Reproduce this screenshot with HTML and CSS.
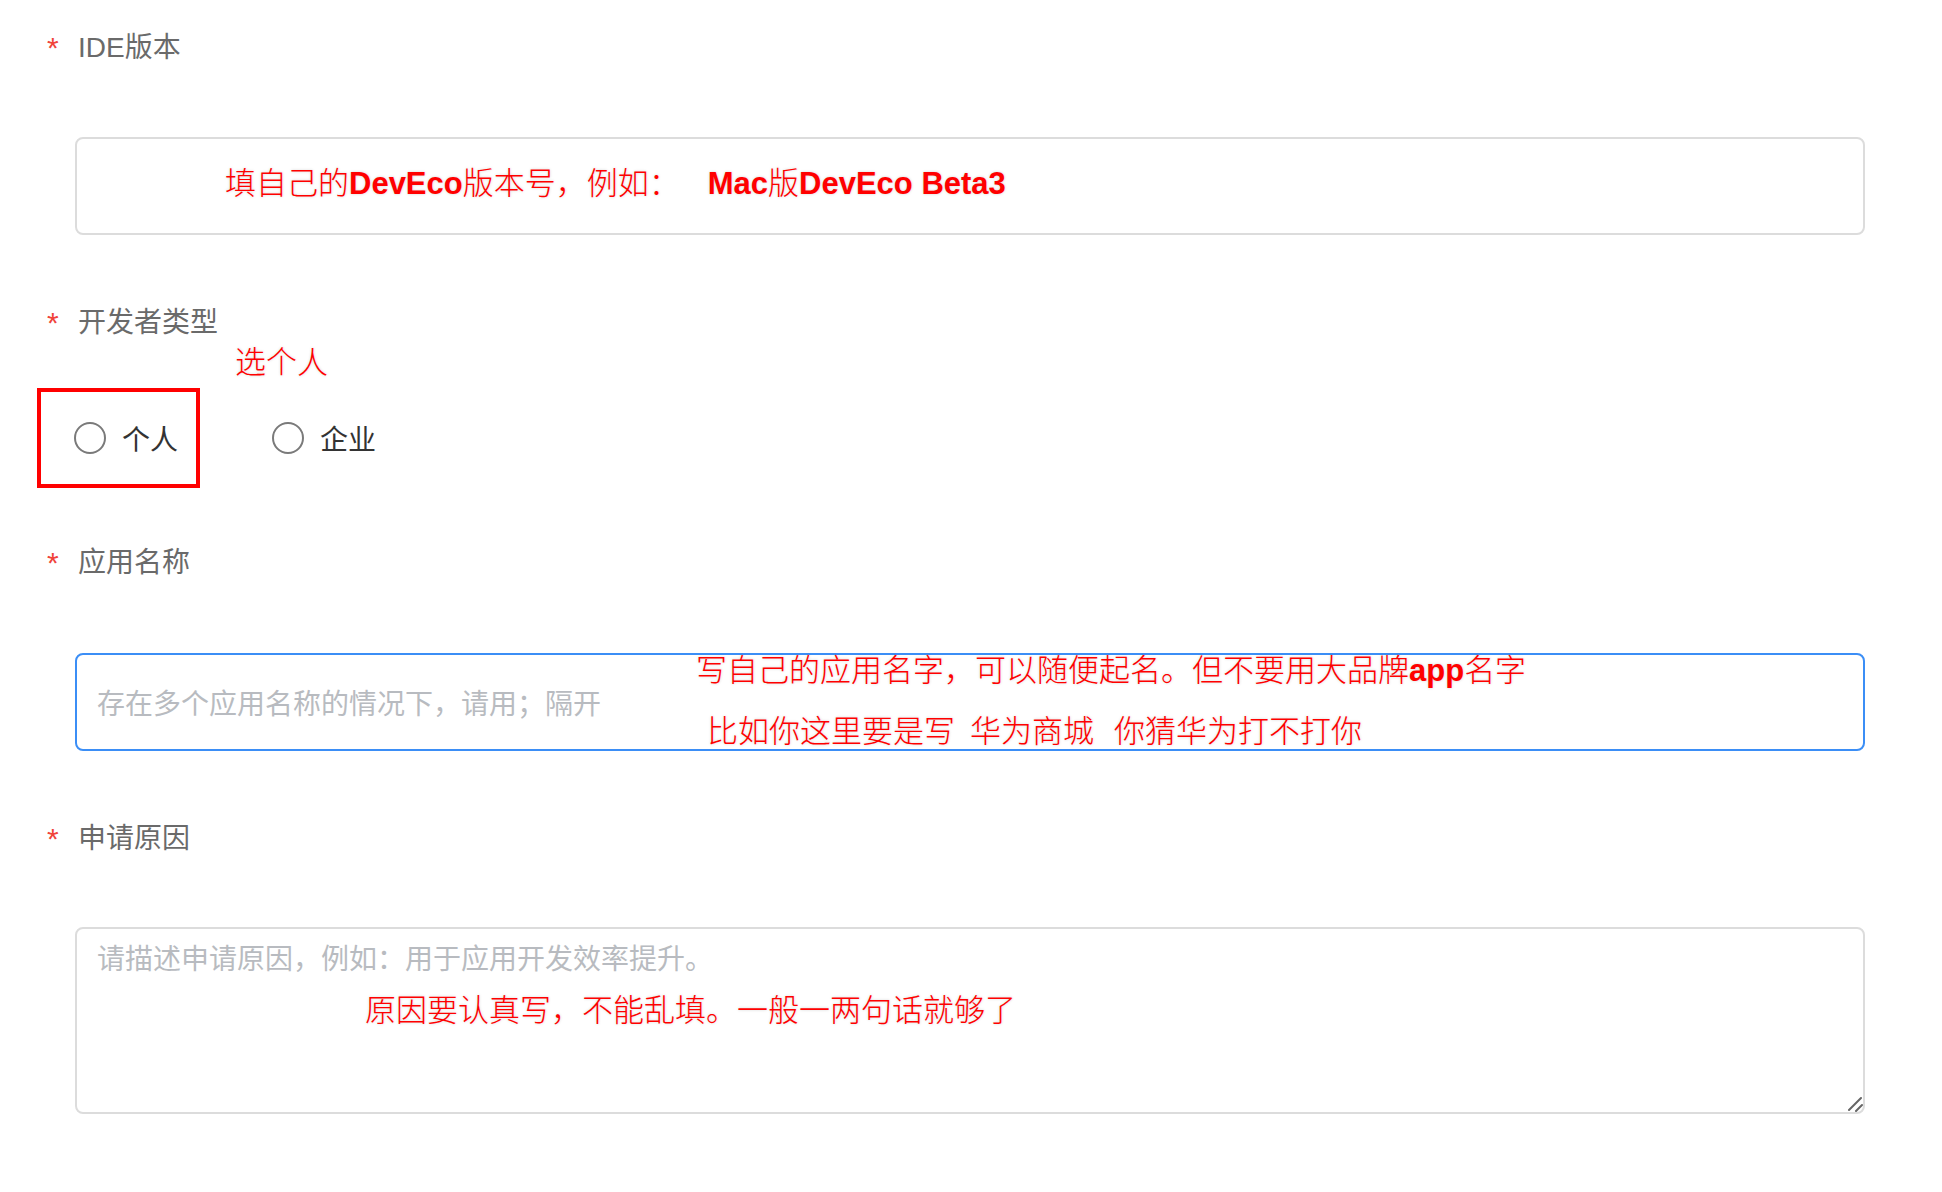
FILE: index.html
```html
<!DOCTYPE html>
<html lang="zh-CN">
<head>
<meta charset="utf-8">
<title>申请表单</title>
<link rel="stylesheet" href="styles.css">
</head>
<body>
<form class="form">
  <div class="item">
    <div class="item-label"><span class="req">*</span><span class="label-text">IDE版本</span></div>
    <div class="field field-first">
      <input class="input" type="text">
      <div class="note note-ide">填自己的<b>DevEco</b>版本号，例如：<span class="spacer spacer-ide"></span><b>Mac</b>版<b>DevEco Beta3</b></div>
    </div>
  </div>

  <div class="item item-gap">
    <div class="item-label"><span class="req">*</span><span class="label-text">开发者类型</span></div>
    <div class="note-flow">选个人</div>
    <div class="radio-row">
      <label class="radio"><input type="radio" name="devtype"><span class="radio-text">个人</span></label>
      <label class="radio"><input type="radio" name="devtype"><span class="radio-text">企业</span></label>
      <div class="highlight"></div>
    </div>
  </div>

  <div class="item item-gap-small">
    <div class="item-label"><span class="req">*</span><span class="label-text">应用名称</span></div>
    <div class="field field-app">
      <input class="input input-focus" type="text" placeholder="存在多个应用名称的情况下，请用；隔开">
      <div class="note note-app1">写自己的应用名字，可以随便起名。但不要用大品牌<b>app</b>名字</div>
      <div class="note note-app2">比如你这里要是写<span class="spacer spacer-a"></span>华为商城<span class="spacer spacer-b"></span>你猜华为打不打你</div>
    </div>
  </div>

  <div class="item item-gap">
    <div class="item-label"><span class="req">*</span><span class="label-text">申请原因</span></div>
    <div class="field field-reason">
      <textarea class="textarea" placeholder="请描述申请原因，例如：用于应用开发效率提升。"></textarea>
      <svg class="resizer" width="16" height="16" viewBox="0 0 16 16" aria-hidden="true">
        <path d="M2 14 L14 2 M9 15 L15 9" stroke="#666666" stroke-width="2" stroke-linecap="round" fill="none"/>
      </svg>
      <div class="note note-reason">原因要认真写，不能乱填。一般一两句话就够了</div>
    </div>
  </div>
</form>
</body>
</html>
```
FILE: styles.css
```css
* {
  box-sizing: border-box;
}

html, body {
  margin: 0;
  background: #ffffff;
}

body {
  font-family: "Liberation Sans", "Noto Sans CJK SC", sans-serif;
  width: 1942px;
  height: 1192px;
  overflow: hidden;
}

.form {
  padding-top: 28px;
}

.item-label {
  display: flex;
  align-items: center;
  height: 40px;
  line-height: 40px;
  font-size: 28px;
  color: #6a6a6a;
}

.req {
  width: 31px;
  margin-left: 47px;
  font-family: "Liberation Sans", sans-serif;
  font-size: 30px;
  line-height: 40px;
  color: #f0433a;
}

.label-text {
  font-family: "Liberation Sans", "Noto Sans CJK SC", sans-serif;
}

.item-gap {
  margin-top: 68px;
}

.item-gap-small {
  margin-top: 55px;
}

.field {
  position: relative;
  margin-left: 75px;
  width: 1790px;
}

.field-first {
  margin-top: 69px;
}

.field-app {
  margin-top: 70px;
}

.field-reason {
  margin-top: 68px;
}

.input {
  display: block;
  width: 100%;
  height: 98px;
  margin: 0;
  padding: 0 20px;
  border: 2px solid #dcdcdc;
  border-radius: 8px;
  outline: none;
  background: #ffffff;
  font-family: "Noto Sans CJK SC", sans-serif;
  font-size: 28px;
  color: #333333;
}

.input-focus {
  border-color: #3b8ef6;
}

.input::placeholder,
.textarea::placeholder {
  color: #b8bbc0;
  opacity: 1;
}

.textarea {
  display: block;
  width: 100%;
  height: 187px;
  margin: 0;
  padding: 8px 20px;
  border: 2px solid #dcdcdc;
  border-radius: 8px;
  outline: none;
  resize: none;
  background: #ffffff;
  font-family: "Noto Sans CJK SC", sans-serif;
  font-size: 28px;
  line-height: 40px;
  color: #333333;
}

.resizer {
  position: absolute;
  right: 2px;
  bottom: 2px;
  display: block;
  pointer-events: none;
}

.note {
  position: absolute;
  white-space: nowrap;
  color: #ff0000;
  font-family: "Liberation Sans", "Noto Sans CJK SC", sans-serif;
  font-size: 31px;
  font-weight: 300;
  line-height: 36px;
  text-shadow: 0 0 3px rgba(0, 0, 0, 0.18);
  pointer-events: none;
}

.note b {
  font-weight: 700;
}

.spacer {
  display: inline-block;
}

.spacer-ide {
  width: 28px;
}

.spacer-a {
  width: 15px;
}

.spacer-b {
  width: 20px;
}

.note-ide {
  left: 150px;
  top: 29px;
}

.note-app1 {
  left: 621px;
  top: 0;
}

.note-app2 {
  left: 632px;
  top: 61px;
}

.note-reason {
  left: 290px;
  top: 66px;
}

.note-flow {
  margin-top: 1px;
  margin-left: 235px;
  height: 32px;
  line-height: 32px;
  font-size: 31px;
  font-weight: 300;
  color: #ff0000;
  font-family: "Noto Sans CJK SC", sans-serif;
  text-shadow: 0 0 3px rgba(0, 0, 0, 0.18);
}

.radio-row {
  position: relative;
  display: flex;
  align-items: center;
  height: 100px;
  margin-top: 12px;
  padding-left: 74px;
}

.radio {
  display: flex;
  align-items: center;
  cursor: pointer;
}

.radio + .radio {
  margin-left: 94px;
}

.radio input {
  appearance: none;
  -webkit-appearance: none;
  width: 32px;
  height: 32px;
  margin: 0;
  border: 2px solid #7a7a7a;
  border-radius: 50%;
  background: #ffffff;
}

.radio-text {
  margin-left: 16px;
  font-family: "Noto Sans CJK SC", sans-serif;
  font-size: 28px;
  line-height: 32px;
  color: #333333;
}

.highlight {
  position: absolute;
  left: 37px;
  top: 0;
  width: 163px;
  height: 100px;
  border: 4px solid #ff0000;
  pointer-events: none;
}
```
